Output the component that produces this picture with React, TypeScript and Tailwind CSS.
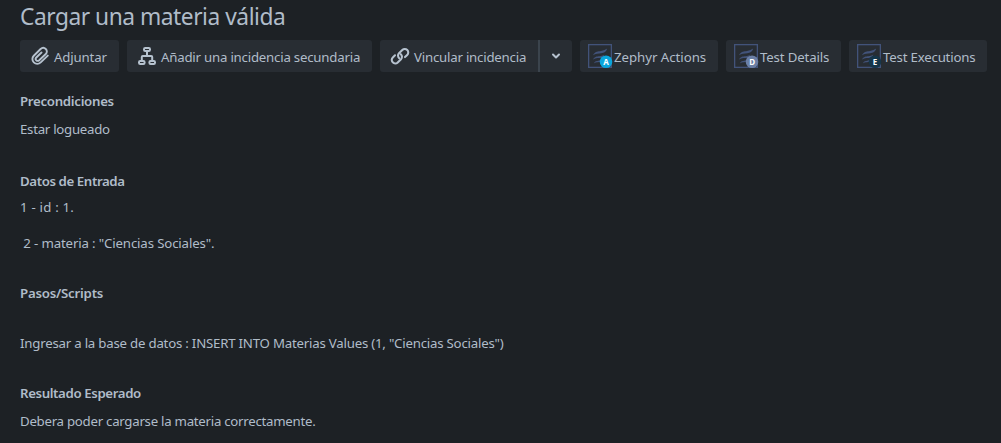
import type { ReactNode } from "react";

const Attach = () => (
  <svg className="h-5 w-5 shrink-0" viewBox="0 0 20 20" fill="none" stroke="#b6c2cf" strokeWidth="1.9" strokeLinecap="round" strokeLinejoin="round">
    <path d="M17.800 9.600 10.700 16.400a4.900 4.900 0 0 1-6.900 0 4.700 4.700 0 0 1 0-6.700L10.600 3a3.800 3.800 0 0 1 5.200 0 3.500 3.500 0 0 1 0 5l-6.600 6.300a2 2 0 0 1-2.900 0 2 2 0 0 1 0-2.800l5.200-5" />
  </svg>
);

const Hierarchy = () => (
  <svg className="h-5 w-5 shrink-0" viewBox="0 0 20 20" fill="none" stroke="#b6c2cf" strokeWidth="2">
    <rect x="7" y="2" width="6" height="3" rx="1.200" />
    <rect x="2" y="15" width="5.600" height="3" rx="1.200" />
    <rect x="12.400" y="15" width="5.600" height="3" rx="1.200" />
    <path d="M10 5.500v4.500M4.800 14.500v-3.500q0-1 1-1h8.400q1 0 1 1v3.500" />
  </svg>
);

const LinkIcon = () => (
  <svg className="h-5 w-5 shrink-0" viewBox="0 0 20 20" fill="none" stroke="#b6c2cf" strokeWidth="2.100" strokeLinecap="round">
    <path d="M9.200 12.200a3.500 3.500 0 0 1-.2-5l3.300-3.200a3.500 3.500 0 0 1 4.900 5l-2.200 2.100" />
    <path d="M10.800 8.200a3.500 3.500 0 0 1 .2 5l-3.300 3.200a3.500 3.500 0 0 1-4.900-5l2.200-2.100" />
  </svg>
);

const Zephyr = ({ letter, color }: { letter: string; color: string }) => (
  <svg className="h-[26px] w-[26px] shrink-0" viewBox="0 0 26 26" fill="none">
    <rect x="0.650" y="1.650" width="22.700" height="22.700" stroke="#42537a" strokeWidth="1.300" />
    <path
      d="M5 12.200c1.800-3.700 5.500-3.600 8-4.100 2.500-.5 4.500-1.200 6.200-2.500-.8 3.200-3 4.300-6 4.700-3 .4-5.600.2-8.200 1.900ZM5 16.500c1.500-3.200 4.300-3 6.300-3.300 2-.2 3.500-.7 5-1.700-.8 2.600-2.500 3.200-4.900 3.400-2.300.2-4.300.1-6.400 1.600ZM5.800 20.500c1-2.600 2.900-2.500 4.400-2.700 1.200-.2 2-.5 2.900-1-.5 2-1.600 2.300-3.100 2.500-1.500.1-2.800.1-4.200 1.200Z"
      fill="#42537a"
    />
    <circle cx="18" cy="18.700" r="6.300" fill={color} />
    <text x="18" y="21.600" fill="#ffffff" fontSize="8" fontWeight="700" fontFamily="Noto Sans, sans-serif" textAnchor="middle">{letter}</text>
  </svg>
);

const button = "flex h-8 shrink-0 items-center rounded-[3px] bg-[#282d33] whitespace-nowrap text-[13.25px] leading-5";

const Text = ({ children }: { children: ReactNode }) => <span className="pt-0.5">{children}</span>;

const Heading = ({ className, children }: { className: string; children: ReactNode }) => (
  <h2 className={`h-5 font-semibold ${className}`}>{children}</h2>
);

export default function App() {
  return (
    <main className="h-[443px] w-[1001px] overflow-hidden bg-[#1d2125] pl-5 font-['Noto_Sans',sans-serif] text-[#b0bcc9]">
      <h1 className="h-8 w-max pt-px text-[22.75px] leading-8 tracking-[-0.47px]">Cargar una materia válida</h1>
      <div className="mt-2 flex gap-2">
        <button className={`${button} w-[99px] gap-1 pl-[10px] tracking-[-0.16px]`}><Attach /><Text>Adjuntar</Text></button>
        <button className={`${button} w-[245px] gap-1 pl-[10px] tracking-[-0.22px]`}><Hierarchy /><Text>Añadir una incidencia secundaria</Text></button>
        <div className="flex">
          <button className={`${button} w-[158px] gap-1 rounded-r-none pl-[10px] tracking-[-0.22px]`}><LinkIcon /><Text>Vincular incidencia</Text></button>
          <button aria-label="Más opciones" className={`${button} w-[34px] justify-center rounded-l-none border-l-2 border-[#3b444d]`}>
            <svg className="h-[10px] w-[10px]" viewBox="0 0 10 10" fill="none" stroke="#b6c2cf" strokeWidth="2" strokeLinecap="round" strokeLinejoin="round"><path d="m2 3.500 3 3 3-3" /></svg>
          </button>
        </div>
        <button className={`${button} w-[138px] pl-2 tracking-[-0.04px]`}><Zephyr letter="A" color="#0aa5dc" /><Text>Zephyr Actions</Text></button>
        <button className={`${button} w-[115px] pl-2 tracking-[-0.15px]`}><Zephyr letter="D" color="#6b7fa5" /><Text>Test Details</Text></button>
        <button className={`${button} w-[138px] pl-2 tracking-[-0.2px]`}><Zephyr letter="E" color="#16364a" /><Text>Test Executions</Text></button>
      </div>
      <div className="whitespace-pre text-[13.25px] leading-5">
        <section className="pt-[19px]">
          <Heading className="tracking-[-0.3px]">Precondiciones</Heading>
          <p className="mt-2 tracking-[-0.28px]">Estar logueado</p>
        </section>
        <section className="pt-8">
          <Heading className="tracking-[-0.4px]">Datos de Entrada</Heading>
          <p className="mt-1.5 tracking-[0.2px]">1 - id : 1.</p>
          <p className="mt-4 tracking-[-0.15px]"> 2 - materia : "Ciencias Sociales".</p>
        </section>
        <section className="pt-[30px]">
          <Heading className="tracking-[-0.23px]">Pasos/Scripts</Heading>
          <p className="mt-[30px] tracking-[-0.22px]">Ingresar a la base de datos : INSERT INTO Materias Values (1, "Ciencias Sociales")</p>
        </section>
        <section className="pt-[30px]">
          <Heading className="tracking-[-0.38px]">Resultado Esperado</Heading>
          <p className="mt-2 tracking-[-0.27px]">Debera poder cargarse la materia correctamente.</p>
        </section>
      </div>
    </main>
  );
}
